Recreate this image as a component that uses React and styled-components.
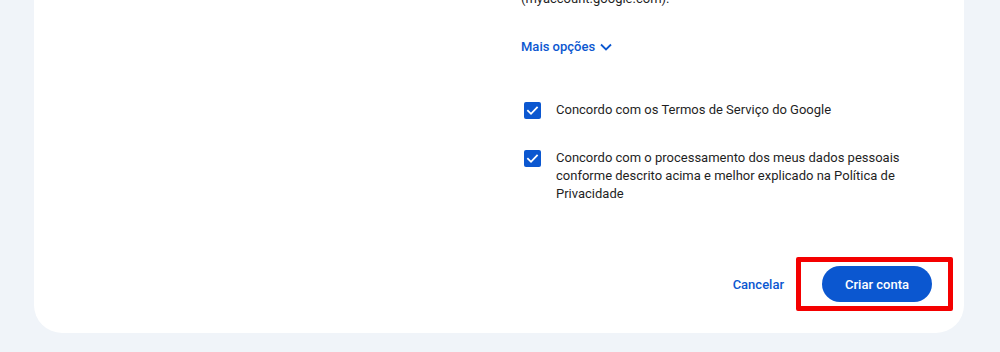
import React from 'react';
import styled, { createGlobalStyle } from 'styled-components';

const GlobalStyle = createGlobalStyle`
  html, body {
    margin: 0;
    padding: 0;
    background: #f0f4f9;
    font-family: Roboto, 'Noto Sans', Arial, sans-serif;
    overflow: hidden;
  }
`;

const Page = styled.div`
  width: 1000px;
  height: 352px;
  overflow: hidden;
  background: #f0f4f9;
`;

const Card = styled.div`
  box-sizing: border-box;
  width: 930px;
  margin: -11px 0 0 34px;
  padding: 0 32px 31px;
  background: #fff;
  border-radius: 0 0 28px 28px;
  display: grid;
  grid-template-columns: 455px 1fr;
`;

const Column = styled.div`
  display: flex;
  flex-direction: column;
`;

const InfoText = styled.p`
  margin: 0;
  font-size: 13px;
  line-height: 20px;
  color: #1f1f1f;
`;

const MoreButton = styled.button`
  align-self: flex-start;
  margin-top: 28px;
  padding: 0;
  border: 0;
  background: none;
  display: flex;
  align-items: center;
  gap: 5px;
  font-family: inherit;
  font-size: 13px;
  font-weight: 500;
  line-height: 20px;
  color: #0b57d0;
  cursor: pointer;
`;

const Checks = styled.div`
  margin-top: 44px;
  display: flex;
  flex-direction: column;
  gap: 30px;
`;

const CheckRow = styled.label`
  display: flex;
  align-items: flex-start;
  gap: 15px;
`;

const Box = styled.span`
  flex: none;
  width: 17px;
  height: 17px;
  margin: 1px 0 0 3px;
  border-radius: 2px;
  background: #0b57d0;
  display: flex;
  align-items: center;
  justify-content: center;
`;

const CheckLabel = styled.span`
  font-size: 13px;
  line-height: 18px;
  color: #1f1f1f;
`;

const Actions = styled.div`
  grid-column: 1 / -1;
  margin-top: 63px;
  display: flex;
  justify-content: flex-end;
  align-items: center;
  gap: 26px;
`;

const TextButton = styled.button`
  border: 0;
  background: none;
  padding: 0 12px;
  height: 36px;
  font-family: inherit;
  font-size: 13px;
  font-weight: 500;
  color: #0b57d0;
  cursor: pointer;
`;

const Highlight = styled.div`
  position: relative;

  &::after {
    content: '';
    position: absolute;
    top: -9px;
    bottom: -9px;
    left: -26px;
    right: -21px;
    border: 5px solid #f40000;
    border-radius: 2px;
    pointer-events: none;
  }
`;

const PrimaryButton = styled.button`
  display: block;
  height: 36px;
  padding: 0 23px;
  border: 0;
  border-radius: 18px;
  background: #0b57d0;
  font-family: inherit;
  font-size: 13px;
  font-weight: 500;
  color: #fff;
  cursor: pointer;
`;

const Check = () => (
  <svg width="13" height="13" viewBox="0 0 13 13" fill="none">
    <path d="M2 6.8l3 3 6-6.3" stroke="#fff" strokeWidth="1.8" strokeLinecap="square" />
  </svg>
);

const Chevron = () => (
  <svg width="12" height="8" viewBox="0 0 12 8" fill="none">
    <path d="M1 1.5l5 5 5-5" stroke="#0b57d0" strokeWidth="1.8" />
  </svg>
);

const terms = [
  'Concordo com os Termos de Serviço do Google',
  'Concordo com o processamento dos meus dados pessoais conforme descrito acima e melhor explicado na Política de Privacidade',
];

export default function App() {
  return (
    <Page>
      <GlobalStyle />
      <Card>
        <div />
        <Column>
          <InfoText>(myaccount.google.com).</InfoText>
          <MoreButton>
            Mais opções
            <Chevron />
          </MoreButton>
          <Checks>
            {terms.map((t) => (
              <CheckRow key={t}>
                <Box>
                  <Check />
                </Box>
                <CheckLabel>{t}</CheckLabel>
              </CheckRow>
            ))}
          </Checks>
        </Column>
        <Actions>
          <TextButton>Cancelar</TextButton>
          <Highlight>
            <PrimaryButton>Criar conta</PrimaryButton>
          </Highlight>
        </Actions>
      </Card>
    </Page>
  );
}
